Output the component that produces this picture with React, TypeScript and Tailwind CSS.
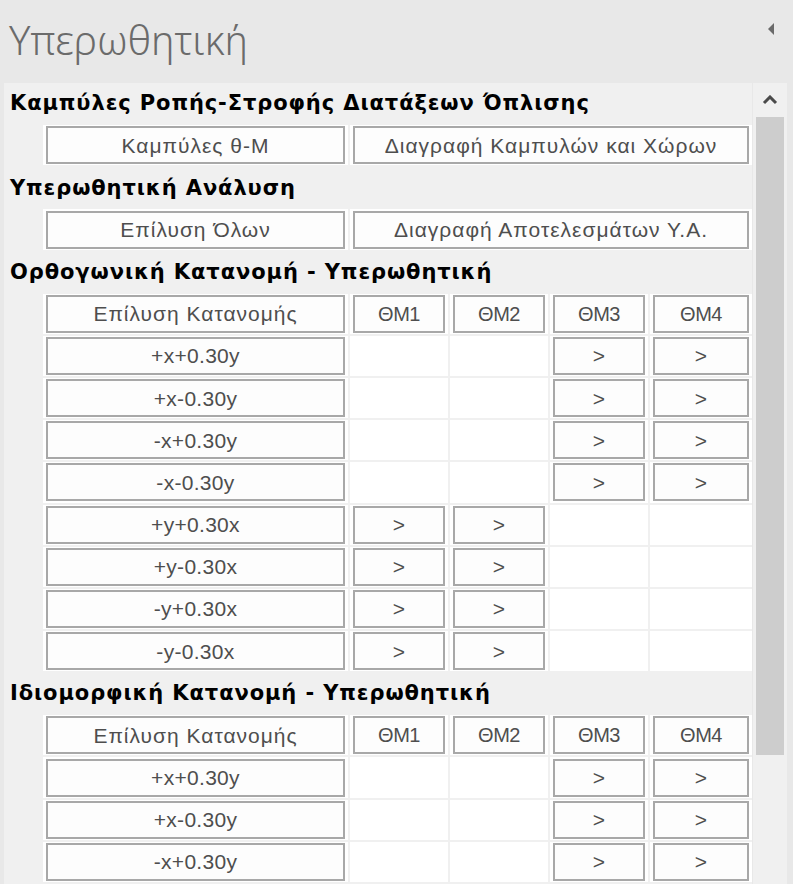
import React from "react";

const BTN_FONT = { fontFamily: '"Liberation Sans", Arial, sans-serif' };
const CAT_FONT = { fontFamily: '"DejaVu Sans", Verdana, sans-serif' };

function Btn({ children, kind }: { children?: React.ReactNode; kind?: "head" | "formula" }) {
  const size =
    kind === "head"
      ? "text-[20px] tracking-[-0.5px]"
      : kind === "formula"
      ? "text-[21px] tracking-[0.3px]"
      : "text-[21px] tracking-[1px]";
  return (
    <div
      className={
        "h-[38px] w-full flex items-center justify-center border-2 border-[#a8a8a8] bg-[#fdfdfd] text-[#4e4e4e] leading-none " +
        size
      }
      style={BTN_FONT}
    >
      {children}
    </div>
  );
}

function Category({ title }: { title: string }) {
  return (
    <div className="h-[42.5px] flex items-center bg-[#f0f0f0] pl-[6px]">
      <span className="text-[21px] font-bold text-black tracking-[0.9px]" style={CAT_FONT}>
        {title}
      </span>
    </div>
  );
}

function Cell({ w, first, children }: { w: string; first?: boolean; children?: React.ReactNode }) {
  return (
    <div
      className={
        w +
        " h-full flex items-center bg-white pl-[3px] pr-[3px] " +
        (first ? "" : "border-l-2 border-[#f0f0f0]")
      }
    >
      {children}
    </div>
  );
}

function Row2({ a, b }: { a: string; b: string }) {
  return (
    <div className="h-[42.5px] flex border-b-2 border-[#f0f0f0]">
      <div className="w-[39px] bg-[#f0f0f0]" />
      <Cell w="w-[305px]" first>
        <Btn>{a}</Btn>
      </Cell>
      <Cell w="flex-1">
        <Btn>{b}</Btn>
      </Cell>
    </div>
  );
}

function Row5({ label, cols, head }: { label: string; cols: (string | null)[]; head?: boolean }) {
  return (
    <div className="h-[42.5px] flex border-b-2 border-[#f0f0f0]">
      <div className="w-[39px] bg-[#f0f0f0]" />
      <Cell w="w-[305px]" first>
        <Btn kind={head ? undefined : "formula"}>{label}</Btn>
      </Cell>
      {cols.map((c, i) => (
        <Cell key={i} w={i === 3 ? "flex-1" : "w-[100px]"}>
          {c !== null ? <Btn kind={head ? "head" : "formula"}>{c}</Btn> : null}
        </Cell>
      ))}
    </div>
  );
}

const xRows = ["+x+0.30y", "+x-0.30y", "-x+0.30y", "-x-0.30y"];
const yRows = ["+y+0.30x", "+y-0.30x", "-y+0.30x", "-y-0.30x"];
const HEAD = ["ΘΜ1", "ΘΜ2", "ΘΜ3", "ΘΜ4"];

export default function App() {
  return (
    <div className="w-[793px] h-[884px] overflow-hidden bg-[#e8e8e8] flex flex-col">
      <div className="h-[83px] flex-none relative">
        <div
          className="absolute left-[9px] top-[20px] text-[40px] font-light text-[#6b6b6b] leading-none"
          style={{ fontFamily: '"Noto Sans", "Open Sans", sans-serif' }}
        >
          Υπερωθητική
        </div>
        <svg className="absolute left-[767px] top-[22px]" width="8" height="14" viewBox="0 0 8 14">
          <polygon points="7,1 1,7 7,13" fill="#6a6a6a" />
        </svg>
      </div>
      <div className="flex flex-1 min-h-0">
        <div className="w-[4px] flex-none" />
        <div className="w-[748px] flex-none flex flex-col">
          <Category title="Καμπύλες Ροπής-Στροφής Διατάξεων Όπλισης" />
          <Row2 a="Καμπύλες θ-Μ" b="Διαγραφή Καμπυλών και Χώρων" />
          <Category title="Υπερωθητική Ανάλυση" />
          <Row2 a="Επίλυση Όλων" b="Διαγραφή Αποτελεσμάτων Υ.Α." />
          <Category title="Ορθογωνική Κατανομή - Υπερωθητική" />
          <Row5 label="Επίλυση Κατανομής" cols={HEAD} head />
          {xRows.map((r) => (
            <Row5 key={r} label={r} cols={[null, null, ">", ">"]} />
          ))}
          {yRows.map((r) => (
            <Row5 key={r} label={r} cols={[">", ">", null, null]} />
          ))}
          <Category title="Ιδιομορφική Κατανομή - Υπερωθητική" />
          <Row5 label="Επίλυση Κατανομής" cols={HEAD} head />
          {xRows.slice(0, 3).map((r) => (
            <Row5 key={"b" + r} label={r} cols={[null, null, ">", ">"]} />
          ))}
        </div>
        <div className="w-[1px] flex-none" />
        <div className="w-[34px] flex-none bg-[#f0f0f0] flex flex-col items-center">
          <div className="h-[34px] w-full flex items-center justify-center">
            <svg width="16" height="10" viewBox="0 0 16 10">
              <polyline points="2,8 8,2 14,8" fill="none" stroke="#4a4a4a" strokeWidth="3" />
            </svg>
          </div>
          <div className="w-[28px] h-[638px] bg-[#cdcdcd]" />
        </div>
      </div>
    </div>
  );
}
